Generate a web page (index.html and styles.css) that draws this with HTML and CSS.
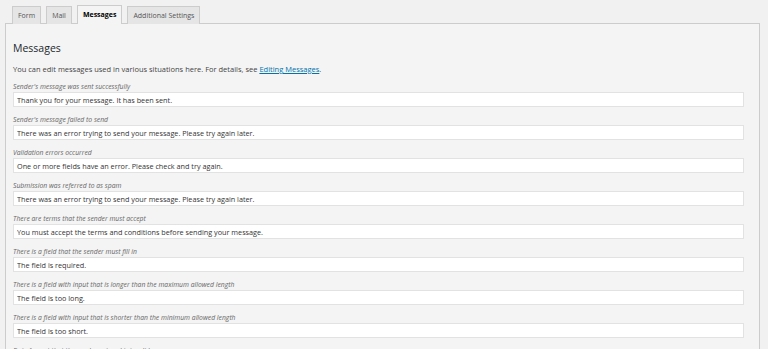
FILE: index.html
```html
<!DOCTYPE html>
<html lang="en">
  <head>
    <meta charset="UTF-8" />
    <meta name="viewport" content="width=device-width, initial-scale=1.0" />
    <title>Contact form messages</title>
    <link rel="stylesheet" href="styles.css">
  </head>

  <body>
    <nav class="tabs">
      <a href="#form" class="tab">Form</a>
      <a href="#mail" class="tab">Mail</a>
      <a href="#messages" class="tab active">Messages</a>
      <a href="#additional" class="tab">Additional Settings</a>
    </nav>

    <section class="panel">
      <h2>Messages</h2>
      <p class="intro">You can edit messages used in various situations here. For details, see <a href="#">Editing Messages</a>.</p>

      <div class="field">
        <label>Sender's message was sent successfully</label>
        <input type="text" value="Thank you for your message. It has been sent." />
      </div>
      <div class="field">
        <label>Sender's message failed to send</label>
        <input type="text" value="There was an error trying to send your message. Please try again later." />
      </div>
      <div class="field">
        <label>Validation errors occurred</label>
        <input type="text" value="One or more fields have an error. Please check and try again." />
      </div>
      <div class="field">
        <label>Submission was referred to as spam</label>
        <input type="text" value="There was an error trying to send your message. Please try again later." />
      </div>
      <div class="field">
        <label>There are terms that the sender must accept</label>
        <input type="text" value="You must accept the terms and conditions before sending your message." />
      </div>
      <div class="field">
        <label>There is a field that the sender must fill in</label>
        <input type="text" value="The field is required." />
      </div>
      <div class="field">
        <label>There is a field with input that is longer than the maximum allowed length</label>
        <input type="text" value="The field is too long." />
      </div>
      <div class="field">
        <label>There is a field with input that is shorter than the minimum allowed length</label>
        <input type="text" value="The field is too short." />
      </div>
      <div class="field">
        <label>Date format that the sender entered is invalid</label>
        <input type="text" value="The date format is incorrect." />
      </div>
    </section>
  </body>
</html>
```

FILE: styles.css
```css
body {
  margin: 0;
  background: #f1f1f1;
  font-family: "Open Sans", sans-serif;
  color: #444;
}

.tabs {
  display: flex;
  gap: 5px;
  padding: 5px 0 0 12px;
  height: 18px;
  position: relative;
  z-index: 1;
}

.tab {
  display: block;
  padding: 0 5px;
  height: 17px;
  line-height: 17px;
  margin-top: 1px;
  font-size: 7px;
  color: #555;
  text-decoration: none;
  background: #e5e5e5;
  border: 1px solid #ccc;
  border-bottom: none;
}

.tab.active {
  height: 18px;
  margin-top: 0;
  background: #f4f4f4;
  color: #000;
  font-weight: bold;
}

.panel {
  margin: 0 8px 0 5px;
  padding: 17px 15px 0 7px;
  border: 1px solid #ccc;
  background: #f4f4f4;
  height: 400px;
}

.panel h2 {
  margin: 0 0 9px;
  font-size: 10.5px;
  line-height: 14px;
  font-weight: normal;
  color: #23282d;
}

.intro {
  margin: 0 0 7px;
  font-size: 7.5px;
  line-height: 10px;
  color: #444;
}

.intro a {
  color: #0073aa;
}

.field {
  margin-bottom: 7px;
}

.field label {
  display: block;
  font-size: 6.8px;
  line-height: 11px;
  font-style: italic;
  color: #666;
}

.field input {
  display: block;
  box-sizing: border-box;
  width: 100%;
  height: 15px;
  margin: 0;
  padding: 0 3px;
  font-family: "Open Sans", sans-serif;
  font-size: 7.25px;
  color: #333;
  background: #fff;
  border: 1px solid #e2e2e2;
  outline: none;
}
```
